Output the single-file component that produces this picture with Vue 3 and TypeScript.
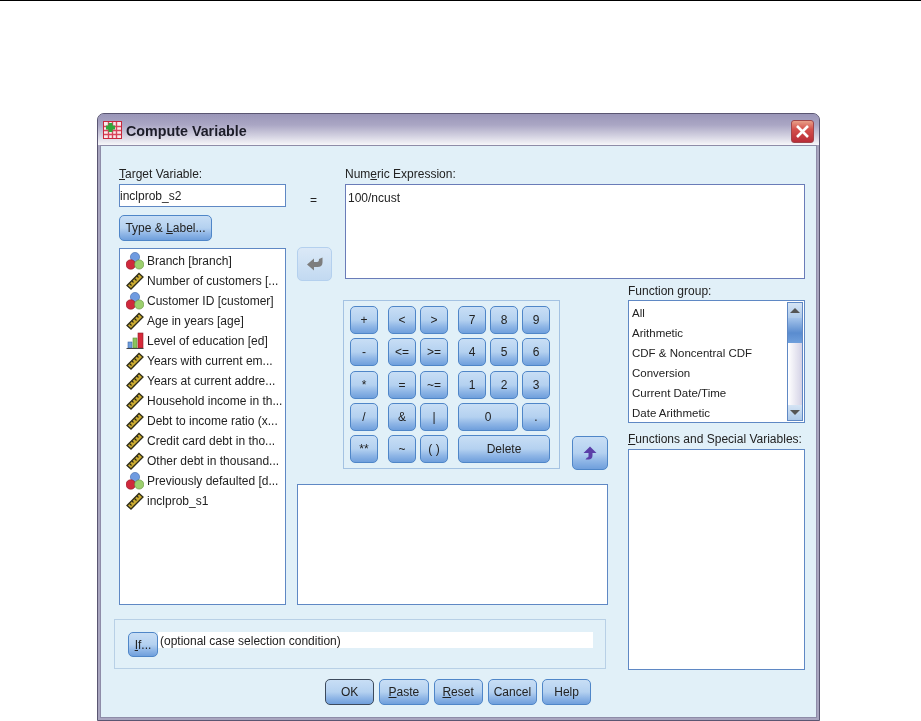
<script setup lang="ts">
type Kind = 'nominal' | 'scale' | 'ordinal'

const variables: { label: string; kind: Kind }[] = [
  { label: 'Branch [branch]', kind: 'nominal' },
  { label: 'Number of customers [...', kind: 'scale' },
  { label: 'Customer ID [customer]', kind: 'nominal' },
  { label: 'Age in years [age]', kind: 'scale' },
  { label: 'Level of education [ed]', kind: 'ordinal' },
  { label: 'Years with current em...', kind: 'scale' },
  { label: 'Years at current addre...', kind: 'scale' },
  { label: 'Household income in th...', kind: 'scale' },
  { label: 'Debt to income ratio (x...', kind: 'scale' },
  { label: 'Credit card debt in tho...', kind: 'scale' },
  { label: 'Other debt in thousand...', kind: 'scale' },
  { label: 'Previously defaulted [d...', kind: 'nominal' },
  { label: 'inclprob_s1', kind: 'scale' },
]

const keys: { text: string; col: number; span?: number }[] = [
  { text: '+', col: 1 }, { text: '<', col: 3 }, { text: '>', col: 4 }, { text: '7', col: 6 }, { text: '8', col: 7 }, { text: '9', col: 8 },
  { text: '-', col: 1 }, { text: '<=', col: 3 }, { text: '>=', col: 4 }, { text: '4', col: 6 }, { text: '5', col: 7 }, { text: '6', col: 8 },
  { text: '*', col: 1 }, { text: '=', col: 3 }, { text: '~=', col: 4 }, { text: '1', col: 6 }, { text: '2', col: 7 }, { text: '3', col: 8 },
  { text: '/', col: 1 }, { text: '&', col: 3 }, { text: '|', col: 4 }, { text: '0', col: 6, span: 2 }, { text: '.', col: 8 },
  { text: '**', col: 1 }, { text: '~', col: 3 }, { text: '( )', col: 4 }, { text: 'Delete', col: 6, span: 3 },
]

const groups = ['All', 'Arithmetic', 'CDF & Noncentral CDF', 'Conversion', 'Current Date/Time', 'Date Arithmetic']
</script>

<template>
  <div class="page">
    <div class="rule"></div>
    <div class="window">
      <div class="titlebar">
        <svg class="title-icon" width="19" height="18" viewBox="0 0 19 18">
          <rect x="0.5" y="0.5" width="18" height="17" fill="#fbeaea" stroke="#c8283c" />
          <path d="M1 5.5H18M1 9.5H18M1 13.5H18M5.5 1V17M9.5 1V17M13.5 1V17" stroke="#d8455a" stroke-width="1.4" />
          <path d="M5.5 2h4v2.5H12v4H9.5V11h-4V8.5H3v-4h2.5z" fill="#2fa83a" />
        </svg>
        <span class="title-text">Compute Variable</span>
        <div class="close">
          <svg width="15" height="15" viewBox="0 0 15 15">
            <path d="M2 2L13 13M13 2L2 13" stroke="#fff" stroke-width="2.6" />
          </svg>
        </div>
      </div>

      <div class="body">
        <div class="main">
          <div class="left">
            <label class="cap"><u>T</u>arget Variable:</label>
            <div class="field target">inclprob_s2</div>
            <button class="btn type-btn">Type &amp; <u>L</u>abel...</button>
            <div class="field var-list">
              <div v-for="v in variables" :key="v.label" class="var-row">
                <svg v-if="v.kind === 'nominal'" class="var-icon" width="18" height="18" viewBox="0 0 18 18">
                  <circle cx="9" cy="5" r="4.6" fill="#6f9be0" stroke="#3e66a8" stroke-width="0.6" />
                  <circle cx="4.8" cy="12.5" r="4.8" fill="#cf2a3c" stroke="#8e1c2a" stroke-width="0.6" />
                  <circle cx="13.2" cy="12.5" r="4.6" fill="#9ccf6e" stroke="#5e9038" stroke-width="0.6" />
                </svg>
                <svg v-else-if="v.kind === 'scale'" class="var-icon" width="18" height="18" viewBox="0 0 18 18">
                  <path d="M1 13.5L13 1.5L17 5L5 17Z" fill="#cbab30" stroke="#2e2c18" stroke-width="1.3" />
                  <path d="M3.5 11.5l2 2M6 9l1.5 1.5M8.5 6.5l2 2M11 4l1.5 1.5" stroke="#2e2c18" stroke-width="1.1" />
                </svg>
                <svg v-else class="var-icon" width="18" height="18" viewBox="0 0 18 18">
                  <rect x="2" y="10" width="4" height="6" fill="#6f9fdc" stroke="#3e66a8" stroke-width="0.6" />
                  <rect x="7" y="6" width="4" height="10" fill="#8ac45e" stroke="#5e9038" stroke-width="0.6" />
                  <rect x="12" y="1" width="5" height="15" fill="#d62a3a" stroke="#8e1c2a" stroke-width="0.6" />
                  <path d="M0.5 16.5H17.5" stroke="#444" stroke-width="1" />
                </svg>
                <span>{{ v.label }}</span>
              </div>
            </div>
          </div>

          <div class="top">
            <div class="eq-col">
              <div class="eq">=</div>
              <button class="btn arrow-btn" disabled>
                <svg width="18" height="16" viewBox="0 0 18 16">
                  <path d="M1 8.5L8 2.5V6H11C12.5 6 13 5 13 3L16.5 1.5V6.5C16.5 9.5 14.5 11 11.5 11H8V14.5Z" fill="#7d7d7d" />
                </svg>
              </button>
            </div>
            <div class="expr-col">
              <label class="cap">Num<u>e</u>ric Expression:</label>
              <div class="field expr">100/ncust</div>
            </div>
          </div>

          <div class="mid">
            <div class="pad-row">
              <div class="keypad">
                <button
                  v-for="k in keys"
                  :key="k.text"
                  class="btn key"
                  :style="{ gridColumn: k.span ? `${k.col} / span ${k.span}` : `${k.col}` }"
                >{{ k.text }}</button>
              </div>
              <button class="btn up-btn">
                <svg width="16" height="16" viewBox="0 0 16 16">
                  <path d="M8 1.5L14.5 8H10.5V10.5C10.5 13 9 14.5 6.5 14.5H3.5L5 12.5C6 12.5 6.5 12 6.5 11V8H1.5Z" fill="#5b3fa8" />
                </svg>
              </button>
            </div>
            <div class="field result"></div>
          </div>

          <div class="func">
            <label class="cap">Function <u>g</u>roup:</label>
            <div class="field group-list">
              <div class="group-items">
                <div v-for="g in groups" :key="g" class="group-row">{{ g }}</div>
              </div>
              <div class="scrollbar">
                <div class="sb-btn"><span class="tri-up"></span></div>
                <div class="sb-thumb"></div>
                <div class="sb-track"></div>
                <div class="sb-btn"><span class="tri-down"></span></div>
              </div>
            </div>
            <label class="cap func-cap"><u>F</u>unctions and Special Variables:</label>
            <div class="field func-list"></div>
          </div>

          <div class="cond">
            <button class="btn if-btn"><u>I</u>f...</button>
            <div class="cond-text">(optional case selection condition)</div>
          </div>
        </div>

        <div class="footer">
          <button class="btn foot-btn default">OK</button>
          <button class="btn foot-btn"><u>P</u>aste</button>
          <button class="btn foot-btn"><u>R</u>eset</button>
          <button class="btn foot-btn">Cancel</button>
          <button class="btn foot-btn">Help</button>
        </div>
      </div>
    </div>
  </div>
</template>

<style>
html,
body {
  margin: 0;
  background: #fff;
  overflow: hidden;
}
</style>

<style scoped>
.page {
  width: 921px;
  height: 721px;
  font-family: "Liberation Sans", Arial, sans-serif;
  font-size: 12px;
  color: #222;
}

.rule {
  height: 1px;
  background: #000;
  margin-bottom: 112px;
}

.window {
  box-sizing: border-box;
  width: 723px;
  height: 608px;
  margin-left: 97px;
  padding: 0 2px 2px;
  border: 1px solid #5a5672;
  border-radius: 7px 7px 0 0;
  background: #a8a5bf;
  display: flex;
  flex-direction: column;
  filter: blur(0.35px);
}

.titlebar {
  height: 31px;
  margin: 0 -2px;
  padding: 0 5px;
  display: flex;
  align-items: center;
  border-radius: 6px 6px 0 0;
  background: linear-gradient(#9a96b8 0%, #aaa6c4 35%, #d2d0e0 70%, #f7f7fa 100%);
}

.title-icon {
  margin-right: 4px;
}

.title-text {
  padding-top: 3px;
  font-size: 14.3px;
  font-weight: bold;
  color: #1c1c28;
}

.close {
  margin: 4px 0 0 auto;
  width: 23px;
  height: 23px;
  display: flex;
  align-items: center;
  justify-content: center;
  border-radius: 3px;
  border: 1px solid #a0454a;
  box-sizing: border-box;
  background: linear-gradient(#e8a088 0%, #d4504c 40%, #b82c38 100%);
}

.body {
  flex: 1;
  border: 1px solid #8e8ca8;
  background: #e1f0f8;
  padding: 21px 0 0 18px;
}

.main {
  display: grid;
  grid-template-columns: 167px 11px 311px 20px 177px;
  grid-template-rows: 112px 326px 65px;
}

.cap {
  display: block;
  line-height: 13px;
}

.field {
  box-sizing: border-box;
  background: #fff;
  border: 1px solid #5f88c4;
}

.left {
  grid-column: 1;
  grid-row: 1 / 3;
  display: flex;
  flex-direction: column;
}

.left .cap,
.expr-col .cap {
  line-height: 15px;
}

.target {
  height: 23px;
  margin-top: 2px;
  line-height: 22px;
}

.btn {
  box-sizing: border-box;
  padding: 0;
  font: inherit;
  color: #222;
  border: 1px solid #4f86c8;
  border-radius: 5px;
  background: linear-gradient(#c8def5 0%, #b4d1f0 50%, #8fb6e6 75%, #6f9fdc 100%);
}

.type-btn {
  width: 93px;
  height: 26px;
  margin-top: 8px;
}

.var-list {
  flex: 1;
  margin-top: 7px;
  padding: 2px 0 0 6px;
}

.var-row {
  height: 20px;
  display: flex;
  align-items: center;
  white-space: nowrap;
}

.var-icon {
  margin-right: 3px;
  flex-shrink: 0;
}

.top {
  grid-column: 3 / 6;
  grid-row: 1;
  display: flex;
}

.eq-col {
  width: 48px;
  flex-shrink: 0;
}

.eq {
  margin: 26px 0 0 13px;
  line-height: 14px;
}

.arrow-btn {
  display: flex;
  align-items: center;
  justify-content: center;
  width: 35px;
  height: 34px;
  margin-top: 40px;
  border-color: #b4d0ee;
  background: linear-gradient(#dbe9f7, #c2d9f1);
}

.expr-col {
  flex: 1;
  display: flex;
  flex-direction: column;
}

.expr-col .cap {
  margin-bottom: 2px;
}

.expr {
  flex: 1;
  padding: 6px 0 0 2px;
  border-color: #6a7cb8;
}

.mid {
  grid-column: 3;
  grid-row: 2;
  padding-top: 21px;
  display: flex;
  flex-direction: column;
}

.pad-row {
  display: flex;
  align-items: flex-end;
  margin-left: 46px;
}

.keypad {
  box-sizing: border-box;
  width: 217px;
  height: 169px;
  padding: 5px 0 0 6px;
  border: 1px solid #a4c2e2;
  display: grid;
  grid-template-columns: 28px 2px 28px 28px 2px 28px 28px 28px;
  grid-auto-rows: 28px;
  gap: 4.25px 4px;
}

.up-btn {
  display: flex;
  align-items: center;
  justify-content: center;
  width: 36px;
  height: 34px;
  margin: 0 0 -1px 12px;
}

.result {
  flex: 1;
  margin-top: 15px;
}

.func {
  grid-column: 5;
  grid-row: 2 / 4;
  padding-top: 6px;
  display: flex;
  flex-direction: column;
}

.group-list {
  height: 123px;
  margin-top: 2px;
  display: flex;
  padding: 1px;
}

.group-items {
  flex: 1;
  padding: 1px 0 0 2px;
  font-size: 11.5px;
  overflow: hidden;
}

.group-row {
  height: 20px;
  line-height: 20px;
  white-space: nowrap;
}

.scrollbar {
  width: 16px;
  margin-left: auto;
  display: flex;
  flex-direction: column;
  border: 1px solid #5f88c4;
  box-sizing: border-box;
}

.sb-btn {
  height: 15px;
  display: flex;
  align-items: center;
  justify-content: center;
  background: linear-gradient(#d5e4f4, #aecaea);
}

.sb-thumb {
  height: 25px;
  background: linear-gradient(#a4c3ea, #5a8ccf 60%, #6f9fdc);
}

.sb-track {
  flex: 1;
  background: linear-gradient(90deg, #fff, #d4d2e6);
}

.tri-up,
.tri-down {
  width: 0;
  height: 0;
  border-left: 5px solid transparent;
  border-right: 5px solid transparent;
}

.tri-up {
  border-bottom: 5px solid #555;
}

.tri-down {
  border-top: 5px solid #555;
}

.func-cap {
  margin-top: 10px;
  margin-bottom: 3px;
}

.func-list {
  flex: 1;
}

.cond {
  grid-column: 1 / 4;
  grid-row: 3;
  box-sizing: border-box;
  height: 50px;
  width: 492px;
  margin: 14px 0 0 -5px;
  padding: 12px 12px 0 13px;
  border: 1px solid #b8d0e6;
  display: flex;
  align-items: flex-start;
}

.if-btn {
  width: 30px;
  height: 25px;
  flex-shrink: 0;
}

.cond-text {
  flex: 1;
  height: 16px;
  line-height: 19px;
  padding-left: 2px;
  background: #fff;
}

.footer {
  display: flex;
  gap: 5px;
  margin: 9px 0 0 206px;
}

.foot-btn {
  width: 49.25px;
  height: 26px;
}

.default {
  border-color: #3c4a5c;
}
</style>
